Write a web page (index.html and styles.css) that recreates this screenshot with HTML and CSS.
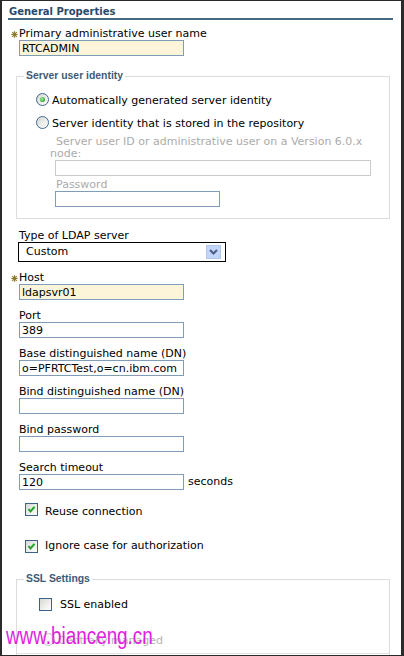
FILE: index.html
```html
<!DOCTYPE html>
<html lang="en">
<head>
<meta charset="utf-8">
<title>General Properties</title>
<link rel="stylesheet" href="styles.css">
</head>
<body>
<div class="frame">
  <div class="title">General Properties</div>
  <div class="form">
    <div class="field first">
      <label class="label"><span class="star"><svg width="7" height="7" viewBox="0 0 7 7"><path d="M3.5 0.3V6.7M0.3 3.5H6.7M1.2 1.2L5.8 5.8M5.8 1.2L1.2 5.8" stroke="#8d7c2b" stroke-width="1.2"/></svg></span>Primary administrative user name</label>
      <input class="input req" type="text" value="RTCADMIN">
    </div>

    <fieldset class="group identity">
      <legend>Server user identity</legend>
      <div class="group-body">
        <div class="radio-row">
          <span class="radio on"></span>
          <span class="opt">Automatically generated server identity</span>
        </div>
        <div class="radio-row second">
          <span class="radio"></span>
          <span class="opt">Server identity that is stored in the repository</span>
        </div>
        <div class="sub">
          <div class="sub-label first-label">Server user ID or administrative user on a Version 6.0.x node:</div>
          <input class="input wide disabled" type="text" disabled>
          <div class="sub-label pw-label">Password</div>
          <input class="input pw" type="password">
        </div>
      </div>
    </fieldset>

    <div class="field after-group">
      <label class="label">Type of LDAP server</label>
      <div class="select">
        <span>Custom</span>
        <span class="arrow"><svg width="15" height="14" viewBox="0 0 15 14"><rect x="0" y="0" width="15" height="14" fill="#c3d5f8"/><rect x="0.5" y="0.5" width="14" height="13" fill="none" stroke="#b2c7ee"/><polyline points="4,5 7.5,8.5 11,5" fill="none" stroke="#4a5e86" stroke-width="2"/></svg></span>
      </div>
    </div>

    <div class="field">
      <label class="label"><span class="star"><svg width="7" height="7" viewBox="0 0 7 7"><path d="M3.5 0.3V6.7M0.3 3.5H6.7M1.2 1.2L5.8 5.8M5.8 1.2L1.2 5.8" stroke="#8d7c2b" stroke-width="1.2"/></svg></span>Host</label>
      <input class="input req" type="text" value="ldapsvr01">
    </div>
    <div class="field">
      <label class="label">Port</label>
      <input class="input" type="text" value="389">
    </div>
    <div class="field">
      <label class="label">Base distinguished name (DN)</label>
      <input class="input" type="text" value="o=PFRTCTest,o=cn.ibm.com">
    </div>
    <div class="field">
      <label class="label">Bind distinguished name (DN)</label>
      <input class="input" type="text" value="">
    </div>
    <div class="field">
      <label class="label">Bind password</label>
      <input class="input" type="password" value="">
    </div>
    <div class="field">
      <label class="label">Search timeout</label>
      <div class="inline">
        <input class="input" type="text" value="120">
        <span class="unit">seconds</span>
      </div>
    </div>

    <div class="check-row first-check">
      <span class="check"><svg width="11" height="11" viewBox="0 0 11 11"><polyline points="2.5,5 4.5,7.5 8.5,2.8" fill="none" stroke="#22a322" stroke-width="2"/></svg></span>
      <span class="opt c1">Reuse connection</span>
    </div>
    <div class="check-row second-check">
      <span class="check"><svg width="11" height="11" viewBox="0 0 11 11"><polyline points="2.5,5 4.5,7.5 8.5,2.8" fill="none" stroke="#22a322" stroke-width="2"/></svg></span>
      <span class="opt">Ignore case for authorization</span>
    </div>

    <fieldset class="group ssl">
      <legend>SSL Settings</legend>
      <div class="ssl-body">
        <div class="ssl-row">
          <span class="check"></span>
          <span class="opt">SSL enabled</span>
        </div>
        <div class="radio-row managed">
          <span class="radio off"></span>
          <span class="opt muted">Centrally managed</span>
        </div>
        <div class="nested"></div>
      </div>
    </fieldset>
  </div>
  <div class="watermark">www.bianceng.cn</div>
</div>
</body>
</html>
```

FILE: styles.css
```css
* { box-sizing: border-box; }

html, body {
  margin: 0;
  padding: 0;
  background: #fff;
}

body {
  font-family: "DejaVu Sans", Verdana, sans-serif;
  font-size: 11px;
  line-height: 12px;
  color: #000;
}

.frame {
  position: relative;
  width: 404px;
  height: 656px;
  border-top: 1px solid #2b2b2b;
  border-left: 2px solid #2b2b2b;
  border-right: 3px solid #2b2b2b;
  border-bottom: 1px solid #2b2b2b;
  overflow: hidden;
  background: #fff;
}

.title {
  margin-left: 6px;
  width: 385px;
  padding: 5px 0 0 1px;
  border-bottom: 2px solid #47687f;
  font-weight: bold;
  font-size: 10px;
  line-height: 12px;
  color: #2a4a69;
}

.form {
  padding-left: 14px;
  width: 390px;
}

.field {
  padding-left: 3px;
  margin-top: 10px;
}

.field.first { margin-top: 8px; }
.field.after-group { margin-top: 11px; }

.label {
  display: block;
  height: 12px;
  line-height: 12px;
  white-space: nowrap;
}

.star {
  display: inline-block;
  width: 9px;
  height: 12px;
  margin-left: -9px;
  vertical-align: top;
}

.star svg {
  display: block;
  margin: 3px 0 0 1px;
}

.input {
  display: block;
  width: 165px;
  height: 16px;
  margin: 0;
  padding: 0 0 0 2px;
  border: 1px solid #7f9db9;
  background: #fff;
  font-family: "DejaVu Sans", Verdana, sans-serif;
  font-size: 11px;
  line-height: 14px;
  color: #000;
  outline: none;
}

.input.req { background: #fdf5d9; }

.group {
  margin: 14px 0 0 0;
  padding: 0 0 11px 0;
  border: 1px solid #dcdcdc;
  width: 374px;
  min-width: 0;
}

.group legend {
  margin-left: 7px;
  padding: 0 2px;
  font-family: "Liberation Sans", Arial, sans-serif;
  font-weight: bold;
  font-size: 10.4px;
  line-height: 12px;
  color: #3d5b79;
}

.group-body {
  padding: 11px 0 0 19px;
}

.radio-row {
  display: flex;
  align-items: flex-start;
}

.radio-row.second { margin-top: 9px; }

.radio {
  flex: none;
  position: relative;
  width: 13px;
  height: 13px;
  border-radius: 50%;
  border: 1px solid #3f6891;
  background: linear-gradient(135deg, #d6d6d0, #ffffff);
}

.radio.on::after {
  content: "";
  position: absolute;
  left: 3px;
  top: 3px;
  width: 5px;
  height: 5px;
  border-radius: 50%;
  background: radial-gradient(circle at 40% 40%, #a8f0a8, #22a322 75%);
}

.radio.off {
  border-color: #c4c4c4;
  background: #f6f6f6;
}

.opt {
  margin-left: 3px;
  margin-top: 2px;
  line-height: 12px;
  white-space: nowrap;
}

.sub {
  margin: 6px 0 0 14px;
  width: 330px;
}

.sub-label {
  color: #ababab;
  line-height: 12px;
}

.first-label { text-indent: 6px; }

.pw-label {
  margin-top: 3px;
  padding-left: 6px;
}

.input.wide {
  width: 316px;
  margin-left: 5px;
}

.input.disabled {
  border-color: #cacaca;
  background: #fff;
}

.input.pw {
  margin-left: 5px;
  width: 165px;
}

.select {
  display: flex;
  align-items: center;
  justify-content: space-between;
  width: 208px;
  height: 20px;
  margin-left: -1px;
  padding: 0 4px 0 7px;
  border: 1px solid #000;
  background: #fff;
}

.arrow svg { display: block; }

.inline {
  display: flex;
  align-items: center;
}

.unit { margin-left: 4px; }

.check-row {
  display: flex;
  align-items: flex-start;
  padding-left: 9px;
}

.first-check { margin-top: 13px; }
.second-check { margin-top: 22px; }

.check-row .opt { margin-left: 7px; margin-top: 0; }
.check-row .opt.c1 { margin-top: 3px; }

.check {
  flex: none;
  width: 13px;
  height: 13px;
  border: 1px solid #3f6185;
  background: linear-gradient(135deg, #d9d9d3, #ffffff);
}

.check svg { display: block; }

.group.ssl {
  margin-top: 20px;
  padding-bottom: 30px;
}

.ssl-body {
  padding: 13px 0 0 22px;
}

.ssl-row {
  display: flex;
  align-items: flex-start;
}

.ssl-row .opt {
  margin-left: 8px;
  margin-top: 1px;
}

.managed {
  margin-top: 22px;
  padding-left: 3px;
}

.muted { color: #b4b4b4; }

.nested {
  margin: 6px 0 0 -22px;
  width: 372px;
  border-top: 1px solid #e2e2e2;
  height: 20px;
}

.watermark {
  position: absolute;
  left: 4px;
  top: 624px;
  font-family: "Liberation Sans", Arial, sans-serif;
  font-size: 23px;
  line-height: 23px;
  color: #e21de2;
  white-space: nowrap;
  transform: scaleX(0.82);
  transform-origin: left top;
}
```
